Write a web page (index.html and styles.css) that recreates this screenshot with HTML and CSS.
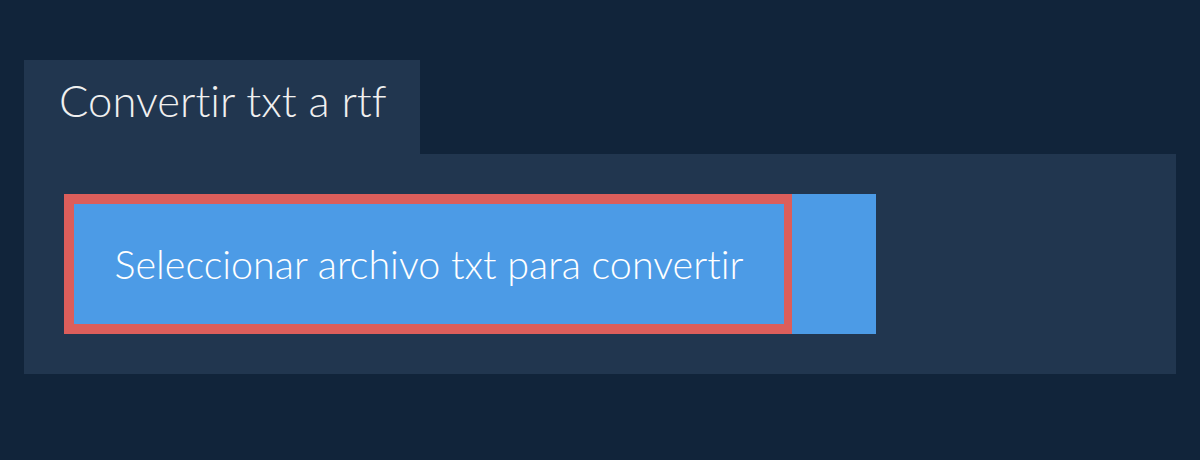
FILE: index.html
```html
<!DOCTYPE html>
<html lang="es">
<head>
<meta charset="utf-8">
<link rel="stylesheet" href="styles.css">
</head>
<body>
<div class="wrap">
  <div class="tab">Convertir txt a rtf</div>
  <div class="panel">
    <div class="button">
      <div class="select">Seleccionar archivo txt para convertir</div>
    </div>
  </div>
</div>
</body>
</html>
```

FILE: styles.css
```css
html, body {
  margin: 0;
  padding: 0;
  background: #11243a;
  width: 1200px;
  height: 460px;
  overflow: hidden;
  font-family: Lato, "Open Sans", sans-serif;
  font-variant-ligatures: none;
  font-feature-settings: "liga" 0;
}
.wrap {
  padding: 60px 24px 0 24px;
}
.tab {
  display: inline-block;
  width: 396px;
  height: 94px;
  box-sizing: border-box;
  background: #21364f;
  color: #f0f0f0;
  font-weight: 300;
  font-size: 43.6px;
  padding: 14px 0 0 35px;
  line-height: 52px;
  vertical-align: top;
}
.panel {
  background: #21364f;
  height: 220px;
  box-sizing: border-box;
  padding: 40px;
}
.button {
  width: 812px;
  height: 140px;
  background: #4c9be6;
  display: flex;
}
.select {
  width: 728px;
  height: 140px;
  box-sizing: border-box;
  border: 10px solid #dc5e5b;
  border-right-width: 8px;
  color: #ffffff;
  font-weight: 300;
  font-size: 39.5px;
  display: flex;
  align-items: center;
  justify-content: center;
  padding-bottom: 2px;
}
```
